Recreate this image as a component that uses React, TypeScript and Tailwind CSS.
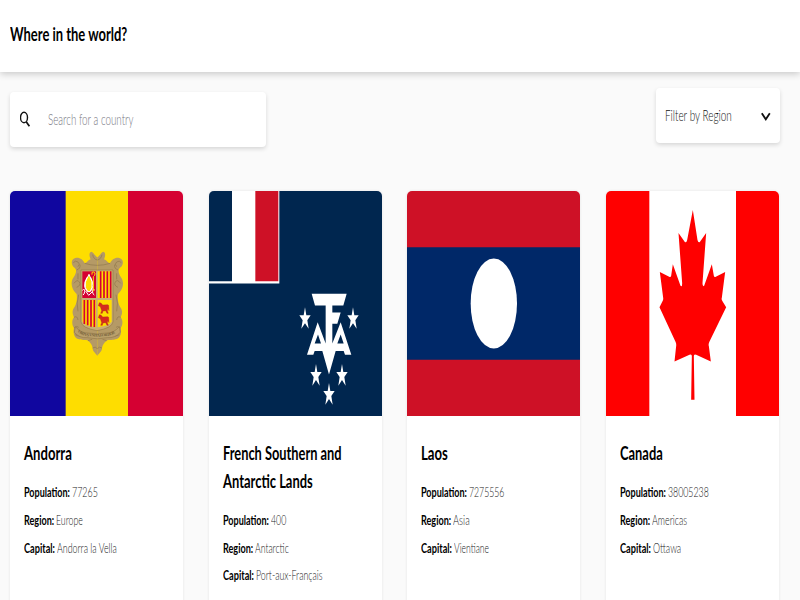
import { useLayoutEffect, useRef, useState, type ReactNode } from "react";

/** A run of text condensed horizontally so that it fills the given width. */
function Fit({ w, children, className = "" }: { w: number; children: ReactNode; className?: string }) {
  const ref = useRef<HTMLSpanElement>(null);
  const [scale, setScale] = useState(1);
  useLayoutEffect(() => {
    if (ref.current) setScale(w / ref.current.offsetWidth);
  }, [w]);
  return (
    <span className={"block shrink-0 whitespace-nowrap " + className} style={{ width: w }}>
      <span ref={ref} className="inline-block origin-left" style={{ transform: `scaleX(${scale})` }}>
        {children}
      </span>
    </span>
  );
}

const flagClass = "block h-[225px] w-full";

const FRAME_HALF =
  "M112 52C106 50 100 35 94 35C86 37 88 50 92 58C84 60 82 68 74 70C70 58 56 50 46 54C36 56 34 66 36 72C38 82 46 82 48 90C50 106 36 112 35 128C34 144 44 156 50 162C52 176 50 190 44 200C34 212 38 224 42 232C34 242 36 256 42 264C38 280 44 296 58 298C70 302 78 298 84 302C92 308 96 314 98 324C98 334 104 336 112 347Z";
const FRAME_DETAIL =
  "M98 44Q101 58 112 60M74 70Q92 76 112 76M40 68Q46 60 54 66T54 80M50 90Q62 86 60 74M42 130Q52 116 58 126T50 142M54 100V118M56 164Q48 190 54 214M42 232Q52 226 54 240M42 264Q52 256 56 262M46 284Q60 292 66 284M84 302Q98 300 104 290M98 324Q106 318 112 326";

function AndorraFlag() {
  return (
    <svg className={flagClass} viewBox="30 573 520 675" preserveAspectRatio="none">
      <path fill="#10069f" d="M30 573h168v675H30z" />
      <path fill="#fedd00" d="M197 573h187v675H197z" />
      <path fill="#d50032" d="M384 573h166v675H384z" />
      <g transform="translate(180 720)">
        {["", "translate(224 0) scale(-1 1)"].map((t) => (
          <g key={t} transform={t}>
            <path fill="#b59a66" d={FRAME_HALF} />
            <path fill="none" stroke="#8f774b" strokeWidth="2" d={FRAME_DETAIL} />
          </g>
        ))}
        <path fill="#c9ae74" stroke="#94794a" strokeWidth="2" d="M63 90h96v156q-3 18-48 26-45-8-48-26z" />
        <path fill="#d50032" d="M67 94h41v80H67z" />
        <path fill="#fedd00" d="M113 94h41v80h-41z" />
        <path fill="#fedd00" d="M67 180h41v82q-38-5-41-19z" />
        <path fill="#fedd00" d="M113 180h42v64q-4 13-42 18z" />
        <path stroke="#d50032" strokeWidth="5" d="M122 94v80M132 94v80M142 94v80M152 94v80M73 180v72M83 180v76M93 180v80M103 180v81" />
        <path fill="#fedd00" stroke="#fff" strokeWidth="3" d="M87 103l9 22v18l-6 12h-7l-7-12v-17z" />
        <path fill="none" stroke="#fff" strokeWidth="3" d="M81 112q-16 30 3 43M92 112q14 29-2 43M67 151q8-7 7 3t-5 11M104 150q-8-5-7 4t6 11M77 153l9 13 12-12" />
        <path fill="none" stroke="#fedd00" strokeWidth="3" d="M96 104q-2-10 5-8t3 10l-4 4v44" />
        <g fill="#d52b1e" stroke="#a8231a" strokeWidth="1">
          <path d="M118 188l5 1 5 6 15-1 3 2 1 16-3-7-2 7 3 8h-4l-4-8-8 1-2 7h-5l3-8-4-12-6-3z" />
          <path d="M118 224l5 1 5 6 15-1 3 2 1 16-3-7-2 7 3 8h-4l-4-8-8 1-2 7h-5l3-8-4-12-6-3z" />
        </g>
        <path fill="#baa06b" stroke="#94794a" strokeWidth="2" d="M46 260q18 20 38 19 28 5 56 0 22 0 38-19l3 17q-16 18-39 16-30 7-60 0-24 2-39-16z" />
        <path id="andorra-motto" fill="none" d="M52 274q18 17 36 14 25 4 48 0 20 1 38-16" />
        <text fontSize="12" fontFamily="Liberation Serif, serif" fontWeight="700" fill="#766039">
          <textPath href="#andorra-motto" textLength="120">VIRTVS VNITA FORTIOR</textPath>
        </text>
      </g>
    </svg>
  );
}

const STARS: [number, number][] = [
  [314, 415],
  [458, 415],
  [347, 586],
  [425, 586],
  [386, 643],
];

function TaafFlag() {
  return (
    <svg className={flagClass} viewBox="26 32 520 676" preserveAspectRatio="none">
      <path fill="#00264f" d="M26 32h520v676H26z" />
      <path fill="#fff" d="M26 32h211v278H26z" />
      <path fill="#00264f" d="M26 32h69v271H26z" />
      <path fill="#ce1126" d="M165 32h69v271h-69z" />
      <path fill="#fff" d="M334 341h105l-10 35h-33v21h25l-10 34h-15v59l25-64 32 98h-19l-4-11h-24l-20 70-20-70h-23l-4 11h-19l32-98 24 64V376h-32z" />
      <path fill="#00264f" d="M353 463l9 27h-19zM421 463l9 27h-19z" />
      {STARS.map(([x, y]) => (
        <path key={`${x}-${y}`} transform={`translate(${x} ${y})`} fill="#fff" d="M0-34L4-10H17L7 5l4 26L0 14l-11 17 4-26-10-15h13z" />
      ))}
    </svg>
  );
}

function LaosFlag() {
  return (
    <svg className={flagClass} viewBox="21 32 520 676" preserveAspectRatio="none">
      <path fill="#ce1126" d="M21 32h520v676H21z" />
      <path fill="#002868" d="M21 201h520v338H21z" />
      <ellipse cx="281.5" cy="370" rx="69.5" ry="135" fill="#fff" />
    </svg>
  );
}

function CanadaFlag() {
  return (
    <svg className={flagClass} viewBox="17 32 520 676" preserveAspectRatio="none">
      <path fill="#fff" d="M17 32h520v676H17z" />
      <path fill="#f00" d="M17 32h130v676H17zM407 32h130v676H407z" />
      <path
        fill="#f00"
        d="M277.500 89l14 90q2 9 7 6l19-27-11 151q0 12 5 8l23-65 6 35q1 5 6 3l28-15-10 78q-2 6 2 10l11 18-50 103q-4 8-2 14l6 46-44-20q-7-3-7 4l2 131h-10l2-131q0-7-7-4l-45 20 5-46q1-7-2-13l-48-104 9-18q3-4 2-10l-10-78 28 15q5 2 6-3l5-35 23 65q5 5 5-8l-11-151 19 27q5 3 7-6z"
      />
    </svg>
  );
}

type Line = [text: string, width: number];
interface Country {
  flag: ReactNode;
  title: Line[];
  population: Line;
  region: Line;
  capital: Line;
}

const COUNTRIES: Country[] = [
  { flag: <AndorraFlag />, title: [["Andorra", 47.5]], population: ["77265", 26], region: ["Europe", 27], capital: ["Andorra la Vella", 60] },
  { flag: <TaafFlag />, title: [["French Southern and", 118.5], ["Antarctic Lands", 89.5]], population: ["400", 15.5], region: ["Antarctic", 33.5], capital: ["Port-aux-Français", 66.5] },
  { flag: <LaosFlag />, title: [["Laos", 27]], population: ["7275556", 35.5], region: ["Asia", 16.5], capital: ["Vientiane", 35] },
  { flag: <CanadaFlag />, title: [["Canada", 42.5]], population: ["38005238", 40.5], region: ["Americas", 35], capital: ["Ottawa", 28] },
];

function Detail({ label, width, value }: { label: string; width: number; value: Line }) {
  return (
    <div className="flex gap-[2.200px] text-[13px] leading-[27.7px]">
      <Fit w={width} className="font-bold">{label}</Fit>
      <Fit w={value[1]} className="font-light text-[#222]">{value[0]}</Fit>
    </div>
  );
}

function Card({ country }: { country: Country }) {
  return (
    <article className="h-[460px] overflow-hidden rounded-[5px] bg-white shadow-[0_0_3px_rgba(0,0,0,0.09)]">
      {country.flag}
      <div className="pt-[24px] pl-[14.200px]">
        <h2 className="mb-[11.600px] text-[18.500px] leading-[27.7px] font-bold">
          {country.title.map(([text, w]) => (
            <Fit key={text} w={w}>{text}</Fit>
          ))}
        </h2>
        <Detail label="Population:" width={45.8} value={country.population} />
        <Detail label="Region:" width={30} value={country.region} />
        <Detail label="Capital:" width={31} value={country.capital} />
      </div>
    </article>
  );
}

export default function App() {
  return (
    <div className="h-[600px] w-[800px] overflow-hidden bg-[#fafafa] font-['Lato','Open_Sans',sans-serif] text-black">
      <header className="h-[72px] bg-white pt-[20px] pl-[10px] shadow-[0_2px_7px_rgba(0,0,0,0.2)]">
        <h1 className="text-[18.500px] leading-[28px] font-bold">
          <Fit w={117}>Where in the world?</Fit>
        </h1>
      </header>
      <div className="flex justify-between pr-[20px] pl-[10px]">
        <div className="mt-[20px] flex h-[55px] w-[256px] items-center rounded-[4px] bg-white pl-[10px] shadow-[0_2px_4px_rgba(0,0,0,0.14)]">
          <svg className="h-[18px] w-[11px]" viewBox="0 0 11 18" fill="none" stroke="#111">
            <ellipse cx="4" cy="6.500" rx="3.500" ry="5.200" strokeWidth="1.400" />
            <path d="M6.200 10.800l3.200 4.400" strokeWidth="1.700" />
          </svg>
          <Fit w={85.5} className="ml-[17px] text-[15.500px] font-light text-[#77777f]">Search for a country</Fit>
        </div>
        <div className="mt-[16px] flex h-[55px] w-[124px] items-center justify-between rounded-[4px] bg-white pr-[9px] pl-[9px] shadow-[0_2px_4px_rgba(0,0,0,0.14)]">
          <Fit w={66.5} className="text-[15px] font-light text-[#111]">Filter by Region</Fit>
          <svg className="h-[10px] w-[10px]" viewBox="0 0 10 10" fill="none" stroke="#111" strokeWidth="1.800">
            <path d="M.8 2.300l4 6 4-6" />
          </svg>
        </div>
      </div>
      <main className="mt-[44px] grid grid-cols-[repeat(4,173.330px)] gap-x-[25.200px] pl-[10px]">
        {COUNTRIES.map((country) => (
          <Card key={country.title[0][0]} country={country} />
        ))}
      </main>
    </div>
  );
}
